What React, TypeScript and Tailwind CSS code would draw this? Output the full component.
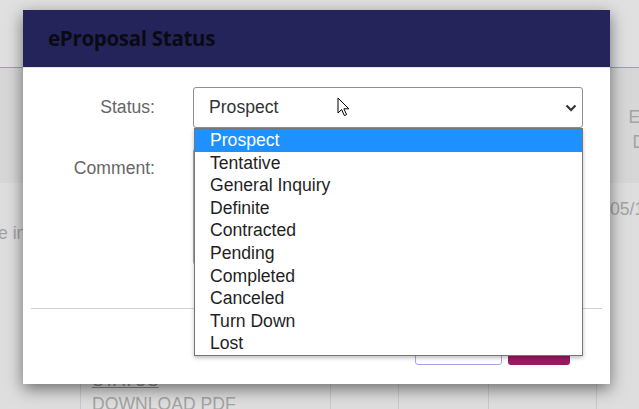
import { Fragment } from "react";

const statuses = [
  "Prospect",
  "Tentative",
  "General Inquiry",
  "Definite",
  "Contracted",
  "Pending",
  "Completed",
  "Canceled",
  "Turn Down",
  "Lost",
];

function Chevron() {
  return (
    <svg width="12" height="8" viewBox="0 0 12 8" className="text-[#333]">
      <polyline points="1.5,1.5 6,6 10.5,1.5" fill="none" stroke="currentColor" strokeWidth="2.2" />
    </svg>
  );
}

function Cursor() {
  return (
    <svg width="13" height="20" viewBox="0 0 13 20" className="absolute left-[314px] top-[87px]">
      <path
        d="M1 1 L1 16 L4.6 12.6 L7.4 18.6 L9.6 17.6 L6.9 11.8 L11.8 11.8 Z"
        fill="#fff"
        stroke="#000"
        strokeWidth="1"
        strokeLinejoin="round"
      />
    </svg>
  );
}

export default function App() {
  return (
    <div className="relative h-[409px] w-[639px] overflow-hidden bg-[#dedede] font-['Liberation_Sans',Arial,sans-serif] text-[17.6px]">
      {/* page behind the overlay */}
      <div className="h-[68px] border-b border-[#86a9b7] bg-[#e0e0e0]" />
      <div className="flex h-[115px] bg-[#d7d7d7]">
        <div className="ml-[621px] mt-[37px] w-[60px] shrink-0 text-center leading-[25px] text-[#a3a3a3]">
          <div>Event</div>
          <div>Date</div>
        </div>
      </div>
      <div className="flex h-[226px] text-[#a3a3a3]">
        <div className="w-[80px] shrink-0 whitespace-nowrap pt-[37px]">
          <span className="-ml-[2px] block">e inquiry</span>
        </div>
        <div className="w-[250px] shrink-0 border-l border-[#c9c9c9] pl-[11px] pt-[187px] leading-[20px]">
          <div className="text-[#8c8c8c] underline">STATUS</div>
          <div className="mt-[4px] whitespace-nowrap">DOWNLOAD PDF</div>
        </div>
        <div className="w-[68px] shrink-0 border-l border-[#c9c9c9]" />
        <div className="w-[90px] shrink-0 border-l border-[#c9c9c9]" />
        <div className="w-[108px] shrink-0 border-l border-[#c9c9c9]" />
        <div className="flex-1 border-l border-[#c9c9c9] pl-[13px] pt-[13px] whitespace-nowrap">
          05/14/2021
        </div>
      </div>

      {/* modal */}
      <div className="absolute left-[23px] top-[10px] h-[374px] w-[587px] bg-white shadow-[0_5px_15px_rgba(0,0,0,0.5)]">
        <div className="flex h-[58px] items-center border-b border-[#e5e5e5] bg-[#25245a] px-[25px]">
          <h4 className="font-['Open_Sans',sans-serif] text-[20.5px] font-bold tracking-[-0.3px] text-[#0a0a14]">
            eProposal Status
          </h4>
        </div>

        <div className="pt-[19px]">
          <div className="flex">
            <label className="w-[132px] text-right leading-[41px] text-[#666]">Status:</label>
            <div className="ml-[38px] flex h-[41px] w-[390px] items-center justify-between rounded-[3px] border border-[#8f8f8f] pl-[15px] pr-[5px] text-[#333]">
              <span>Prospect</span>
              <Chevron />
            </div>
          </div>
          <div className="mt-[20px] flex">
            <label className="w-[132px] text-right leading-[41px] text-[#666]">Comment:</label>
            <div className="ml-[38px] h-[117px] w-[390px] rounded-[3px] border border-[#aaa]" />
          </div>
        </div>

        <div className="mx-[8px] mt-[43px] border-t border-[#cfcfcf]" />

        <div className="flex justify-end gap-[6px] pr-[40px] pt-[21px]">
          <button className="h-[35px] w-[87px] rounded-[3px] border border-[#a9a3e0] bg-white text-[#25245a]">
            Cancel
          </button>
          <button className="h-[35px] w-[62px] rounded-[3px] bg-[#9a1a62] text-white">Save</button>
        </div>

        {/* open native list */}
        <div className="absolute left-[171px] top-[118px] w-[389px] border border-[#767676] bg-white shadow-[0_2px_4px_rgba(0,0,0,0.25)]">
          {statuses.map((s, i) => (
            <Fragment key={s}>
              <div
                className={
                  i === 0
                    ? "h-[22.6px] bg-[#1e90ff] pl-[15px] leading-[22.6px] text-white"
                    : "h-[22.6px] pl-[15px] leading-[22.6px] text-[#1f1f1f]"
                }
              >
                {s}
              </div>
            </Fragment>
          ))}
        </div>

        <Cursor />
      </div>
    </div>
  );
}
